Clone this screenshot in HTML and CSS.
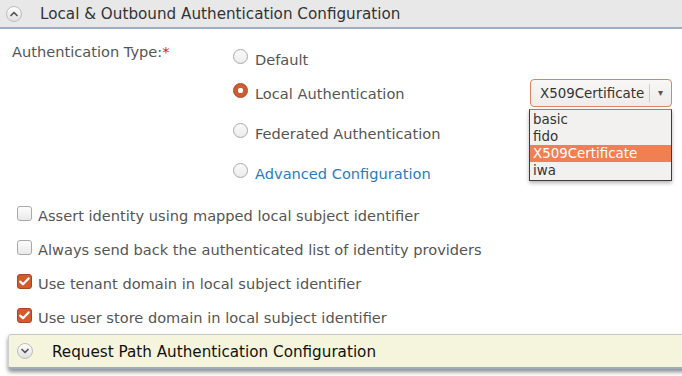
FILE: index.html
```html
<!DOCTYPE html>
<html lang="en">
  <head>
    <meta charset="UTF-8" />
    <title>Local &amp; Outbound Authentication Configuration</title>
    <link rel="stylesheet" href="styles.css">
  </head>
  <body>
    <section class="panel">
      <h2 class="panel-head">
        <span class="toggle">
          <svg width="10" height="10" viewBox="0 0 10 10"><path d="M2 6.5 L5 3.5 L8 6.5" fill="none" stroke="#555" stroke-width="1.7" stroke-linecap="round" stroke-linejoin="round"/></svg>
        </span>
        Local &amp; Outbound Authentication Configuration
      </h2>

      <div class="panel-body">
        <div class="auth-type">
          <div class="field-label">Authentication Type:<span class="req">*</span></div>
          <ul class="options">
            <li class="option first"><span class="radio"></span>Default</li>
            <li class="option">
              <span class="radio checked"></span>Local Authentication
              <div class="picker">
                <div class="select">
                  <span class="value">X509Certificate</span>
                  <span class="arrow">▾</span>
                </div>
                <ul class="menu">
                  <li>basic</li>
                  <li>fido</li>
                  <li class="active">X509Certificate</li>
                  <li>iwa</li>
                </ul>
              </div>
            </li>
            <li class="option"><span class="radio"></span>Federated Authentication</li>
            <li class="option"><span class="radio"></span><a href="#">Advanced Configuration</a></li>
          </ul>
        </div>

        <ul class="checks">
          <li><span class="box"></span>Assert identity using mapped local subject identifier</li>
          <li><span class="box"></span>Always send back the authenticated list of identity providers</li>
          <li><span class="box checked"></span>Use tenant domain in local subject identifier</li>
          <li><span class="box checked"></span>Use user store domain in local subject identifier</li>
        </ul>
      </div>
    </section>

    <section class="panel collapsed">
      <h2 class="panel-head">
        <span class="toggle">
          <svg width="10" height="10" viewBox="0 0 10 10"><path d="M2 3.5 L5 6.5 L8 3.5" fill="none" stroke="#555" stroke-width="1.7" stroke-linecap="round" stroke-linejoin="round"/></svg>
        </span>
        Request Path Authentication Configuration
      </h2>
    </section>
  </body>
</html>
```

FILE: styles.css
```css
* {
  box-sizing: border-box;
  margin: 0;
  padding: 0;
}
body {
  width: 682px;
  height: 376px;
  overflow: hidden;
  background: #fff;
  font-family: "DejaVu Sans", sans-serif;
  font-size: 14.6px;
  color: #555;
}
ul {
  list-style: none;
}

.panel-head {
  display: flex;
  align-items: center;
  height: 29px;
  padding-left: 6px;
  background: #e8e8e8;
  border-bottom: 2px solid #9eadc3;
  font-size: 15.2px;
  font-weight: normal;
  color: #333;

  & .toggle {
    display: flex;
    align-items: center;
    justify-content: center;
    width: 16px;
    height: 16px;
    margin-right: 18px;
    border: 1px solid #bdbdbd;
    border-radius: 50%;
    background: linear-gradient(#fdfdfd, #e0e0e0);
  }
}

.panel-body {
  padding: 0 0 0 12px;
}

.auth-type {
  display: flex;

  & .field-label {
    width: 221px;
    padding-top: 14px;
    line-height: 18px;
  }
  & .req {
    color: #e11;
  }
}

.options {
  display: flex;
  flex-direction: column;
  gap: 12px;
  width: 439px;
  padding-top: 16px;

  & .option {
    display: flex;
    align-items: center;
    height: 28px;
    position: relative;
  }
  & .option.first {
    margin-bottom: -6px;
  }
  & a {
    color: #2b7bbf;
    text-decoration: none;
  }
}

.radio {
  width: 15px;
  height: 15px;
  margin: -5px 7px 0 0;
  border: 1px solid #a9a9a9;
  border-radius: 50%;
  background: linear-gradient(#fafafa, #ececec);

  &.checked {
    border-color: #a8461f;
    background: radial-gradient(circle, #fff 0 2.4px, #d15c30 3px);
  }
}

.picker {
  position: relative;
  margin-left: auto;

  & .select {
    display: flex;
    align-items: center;
    width: 142px;
    height: 28px;
    padding-left: 9px;
    border: 1px solid #e0825a;
    border-radius: 4px;
    background: linear-gradient(#f8f7f6, #edeceb);
    font-size: 13.4px;
    color: #333;
  }
  & .value {
    flex: 1;
  }
  & .arrow {
    width: 22px;
    border-left: 1px solid #ccc;
    font-size: 10px;
    line-height: 18px;
    text-align: center;
    color: #555;
  }
}

.menu {
  position: absolute;
  top: 30px;
  left: -1px;
  width: 143px;
  padding: 1px 0 1px;
  background: #f2f1f0;
  border: 1px solid #3c3c3c;
  border-top-color: #888;
  box-shadow: 0 2px 4px rgba(0, 0, 0, 0.3);
  font-size: 13.4px;
  line-height: 17px;
  color: #333;
  z-index: 2;

  & li {
    padding-left: 3px;
  }
  & li.active {
    background: #f07f52;
    color: #fff;
  }
}

.checks {
  padding: 11px 0 0 5px;

  & li {
    display: flex;
    align-items: center;
    height: 34px;
  }
}

.box {
  width: 15px;
  height: 15px;
  margin: -3px 6px 0 0;
  border: 1px solid #a9a9a9;
  border-radius: 3px;
  background: linear-gradient(#fdfdfd, #e9e9e9);

  &.checked {
    border-color: #a8461f;
    background: #d4592c url("data:image/svg+xml;utf8,<svg xmlns='http://www.w3.org/2000/svg' viewBox='0 0 15 15'><path d='M3.2 7.6 L6 10.3 L11.6 4.4' fill='none' stroke='white' stroke-width='2.2' stroke-linecap='round' stroke-linejoin='round'/></svg>") center / 15px 15px no-repeat;
  }
}

.panel.collapsed {
  margin: 0 -4px 0 8px;

  & .panel-head {
    height: 35px;
    padding: 2px 0 0 8px;
    background: #f5f4dc;
    border-top: 1px solid #c8c8c8;
    border-left: 1px solid #d0d0d0;
    border-radius: 3px 0 0 3px;
    box-shadow: 0 3px 4px rgba(0, 0, 0, 0.45);
    color: #111;
  }
  & .toggle {
    margin: -2px 19px 0 0;
  }
}
```
